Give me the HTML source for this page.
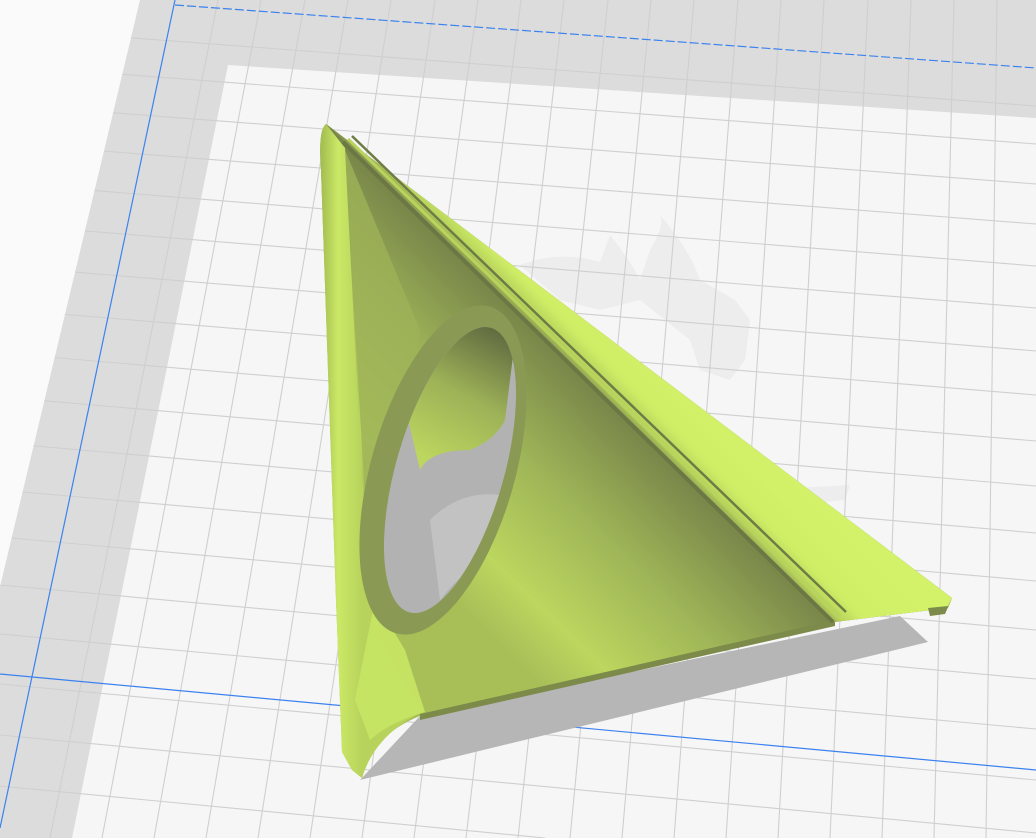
<!DOCTYPE html>
<html><head><meta charset="utf-8"><style>
html,body{margin:0;padding:0;background:#fafafa;width:1036px;height:838px;overflow:hidden;}
svg{display:block;overflow:hidden}
</style></head><body>
<svg width="1036" height="838" viewBox="0 0 1036 838" xmlns="http://www.w3.org/2000/svg">
<defs>
<clipPath id="plate"><polygon points="140,0 1036,0 1036,838 -60,838"/></clipPath>
<linearGradient id="body" gradientUnits="userSpaceOnUse" x1="660" y1="420" x2="470" y2="615">
<stop offset="0" stop-color="#6f7b46"/><stop offset="0.45" stop-color="#9fb558"/><stop offset="0.8" stop-color="#bcd65e"/><stop offset="1" stop-color="#a8bf58"/>
</linearGradient>
<linearGradient id="flange" gradientUnits="userSpaceOnUse" x1="612" y1="410" x2="672" y2="350">
<stop offset="0" stop-color="#7f8c4c"/><stop offset="0.15" stop-color="#b8d35c"/><stop offset="0.35" stop-color="#cfee66"/><stop offset="1" stop-color="#d4f269"/>
</linearGradient>
<linearGradient id="rim" gradientUnits="userSpaceOnUse" x1="322" y1="400" x2="362" y2="400">
<stop offset="0" stop-color="#a6bf52"/><stop offset="0.4" stop-color="#cbe866"/><stop offset="1" stop-color="#b8d35c"/>
</linearGradient>
<linearGradient id="tube" gradientUnits="userSpaceOnUse" x1="500" y1="330" x2="430" y2="460">
<stop offset="0" stop-color="#5f6a40"/><stop offset="0.5" stop-color="#9db157"/><stop offset="1" stop-color="#bcd65f"/>
</linearGradient>
<clipPath id="hole"><ellipse cx="450" cy="470" rx="54" ry="148" transform="rotate(16 450 470)"/></clipPath>
</defs>
<polygon points="140,0 1036,0 1036,838 -60,838" fill="#dcdcdc"/>
<polygon points="228,65 1036,118 1036,838 72,838" fill="#f6f6f6"/>
<g fill="#ebebeb" opacity="0.8">
<path d="M520,265 Q560,250 600,262 L610,235 Q630,260 640,280 L650,250 Q665,225 660,215 Q690,250 700,280 L735,300 L750,320 L745,360 L730,380 L700,370 L690,340 L640,300 L600,310 L560,300 Z"/>
<path d="M760,490 L850,485 L845,500 L790,505 Z"/>
</g>
<g clip-path="url(#plate)" stroke="#cfcfcf" stroke-width="1.1" fill="none">
<line x1="218" y1="0" x2="50" y2="838"/><line x1="261" y1="0" x2="102" y2="838"/><line x1="305" y1="0" x2="154" y2="838"/><line x1="348" y1="0" x2="206" y2="838"/><line x1="391" y1="0" x2="258" y2="838"/><line x1="435" y1="0" x2="310" y2="838"/><line x1="478" y1="0" x2="362" y2="838"/><line x1="521" y1="0" x2="414" y2="838"/><line x1="564" y1="0" x2="466" y2="838"/><line x1="608" y1="0" x2="518" y2="838"/><line x1="651" y1="0" x2="570" y2="838"/><line x1="694" y1="0" x2="622" y2="838"/><line x1="738" y1="0" x2="674" y2="838"/><line x1="781" y1="0" x2="726" y2="838"/><line x1="824" y1="0" x2="778" y2="838"/><line x1="868" y1="0" x2="830" y2="838"/><line x1="911" y1="0" x2="882" y2="838"/><line x1="954" y1="0" x2="934" y2="838"/><line x1="997" y1="0" x2="986" y2="838"/>
<line x1="0" y1="28" x2="1036" y2="106"/><line x1="0" y1="65" x2="1036" y2="144"/><line x1="0" y1="104" x2="1036" y2="184"/><line x1="0" y1="143" x2="1036" y2="224"/><line x1="0" y1="183" x2="1036" y2="266"/><line x1="0" y1="224" x2="1036" y2="308"/><line x1="0" y1="266" x2="1036" y2="351"/><line x1="0" y1="309" x2="1036" y2="395"/><line x1="0" y1="353" x2="1036" y2="441"/><line x1="0" y1="397" x2="1036" y2="486"/><line x1="0" y1="443" x2="1036" y2="533"/><line x1="0" y1="490" x2="1036" y2="581"/><line x1="0" y1="537" x2="1036" y2="630"/><line x1="0" y1="585" x2="1036" y2="679"/><line x1="0" y1="634" x2="1036" y2="729"/><line x1="0" y1="684" x2="1036" y2="780"/><line x1="0" y1="735" x2="1036" y2="833"/><line x1="0" y1="786" x2="545" y2="838"/>
</g>
<line x1="175" y1="0" x2="0" y2="828" stroke="#3b82f0" stroke-width="1.2"/>
<line x1="175" y1="5" x2="1036" y2="68" stroke="#3b82f0" stroke-width="1.2" stroke-dasharray="9,3"/>
<line x1="0" y1="674" x2="1036" y2="770" stroke="#3b82f0" stroke-width="1.2"/>
<polygon points="360,780 928,642 900,616 420,716" fill="#b6b6b6"/>
<path d="M326,124 L952,598 L948,608 L835,622 L420,716 Q372,735 362,778 L352,770 L342,752 L336,600 L321,170 Q318,130 326,124 Z" fill="url(#body)"/>
<path d="M420,714 L835,620 L835,626 L420,720 Z" fill="#7c8a4a"/>
<path d="M345,150 L420,330 L395,470 L375,600 L365,500 Z" fill="#9db257" opacity="0.8"/>
<path d="M326,124 L345,148 L362,480 L380,640 L422,712 Q375,735 362,778 L352,770 L342,752 L336,600 L321,170 Q318,130 326,124 Z" fill="url(#rim)"/>
<path d="M375,600 L405,650 L425,712 Q390,722 370,740 L355,700 Z" fill="#c8e664" opacity="0.9"/>
<polygon points="326,124 952,598 948,608 835,622 343,140" fill="url(#flange)"/>
<line x1="343" y1="142" x2="833" y2="622" stroke="#6b7744" stroke-width="4"/>
<line x1="348" y1="139" x2="840" y2="616" stroke="#b9d45c" stroke-width="3"/>
<line x1="352" y1="136" x2="846" y2="612" stroke="#6e7b45" stroke-width="2.5"/>
<ellipse cx="443" cy="470" rx="72" ry="170" transform="rotate(16 443 470)" fill="#8a9a55"/>
<ellipse cx="450" cy="470" rx="54" ry="148" transform="rotate(16 450 470)" fill="#b2b2b2"/>
<g clip-path="url(#hole)">
<path d="M420,470 Q430,450 470,450 Q495,440 505,420 L520,300 L380,300 Z" fill="url(#tube)"/>
<path d="M430,520 Q460,490 500,495 L505,560 Q470,560 440,600 Z" fill="#c2c2c2"/>
</g>
<polygon points="948,606 952,598 945,614 930,616 928,608" fill="#7c8a4a"/>
</svg>
</body></html>
